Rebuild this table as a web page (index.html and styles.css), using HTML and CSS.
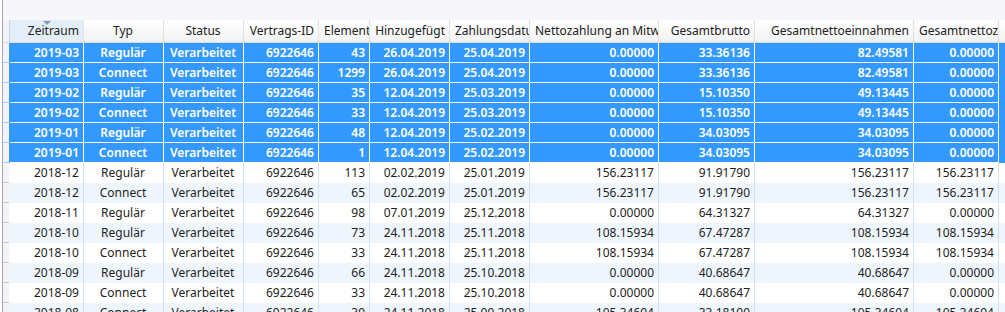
FILE: index.html
```html
<!DOCTYPE html>
<html lang="de">
<head>
<meta charset="utf-8">
<title>Zahlungen</title>
<link rel="stylesheet" href="styles.css">
</head>
<body>
<div class="frame">
  <div class="topbar"></div>
  <div class="table">
    <div class="row hdr">
      <div class="rh"></div>
      <div class="c r sorted"><span class="arrow"></span>Zeitraum</div>
      <div class="c m">Typ</div>
      <div class="c m">Status</div>
      <div class="c r">Vertrags-ID</div>
      <div class="c l">Elemente</div>
      <div class="c r">Hinzugefügt</div>
      <div class="c l">Zahlungsdatum</div>
      <div class="c l">Nettozahlung an Mitwirkende</div>
      <div class="c r">Gesamtbrutto</div>
      <div class="c r">Gesamtnettoeinnahmen</div>
      <div class="c l">Gesamtnettozahlung</div>
    </div>
    <div class="row sel"><div class="rh"></div><div class="c r">2019-03</div><div class="c m">Regulär</div><div class="c m">Verarbeitet</div><div class="c r">6922646</div><div class="c r">43</div><div class="c r">26.04.2019</div><div class="c r">25.04.2019</div><div class="c r">0.00000</div><div class="c r">33.36136</div><div class="c r">82.49581</div><div class="c r">0.00000</div></div>
    <div class="row sel"><div class="rh"></div><div class="c r">2019-03</div><div class="c m">Connect</div><div class="c m">Verarbeitet</div><div class="c r">6922646</div><div class="c r">1299</div><div class="c r">26.04.2019</div><div class="c r">25.04.2019</div><div class="c r">0.00000</div><div class="c r">33.36136</div><div class="c r">82.49581</div><div class="c r">0.00000</div></div>
    <div class="row sel"><div class="rh"></div><div class="c r">2019-02</div><div class="c m">Regulär</div><div class="c m">Verarbeitet</div><div class="c r">6922646</div><div class="c r">35</div><div class="c r">12.04.2019</div><div class="c r">25.03.2019</div><div class="c r">0.00000</div><div class="c r">15.10350</div><div class="c r">49.13445</div><div class="c r">0.00000</div></div>
    <div class="row sel"><div class="rh"></div><div class="c r">2019-02</div><div class="c m">Connect</div><div class="c m">Verarbeitet</div><div class="c r">6922646</div><div class="c r">33</div><div class="c r">12.04.2019</div><div class="c r">25.03.2019</div><div class="c r">0.00000</div><div class="c r">15.10350</div><div class="c r">49.13445</div><div class="c r">0.00000</div></div>
    <div class="row sel"><div class="rh"></div><div class="c r">2019-01</div><div class="c m">Regulär</div><div class="c m">Verarbeitet</div><div class="c r">6922646</div><div class="c r">48</div><div class="c r">12.04.2019</div><div class="c r">25.02.2019</div><div class="c r">0.00000</div><div class="c r">34.03095</div><div class="c r">34.03095</div><div class="c r">0.00000</div></div>
    <div class="row sel"><div class="rh"></div><div class="c r">2019-01</div><div class="c m">Connect</div><div class="c m">Verarbeitet</div><div class="c r">6922646</div><div class="c r">1</div><div class="c r">12.04.2019</div><div class="c r">25.02.2019</div><div class="c r">0.00000</div><div class="c r">34.03095</div><div class="c r">34.03095</div><div class="c r">0.00000</div></div>
    <div class="row"><div class="rh"></div><div class="c r">2018-12</div><div class="c m">Regulär</div><div class="c m">Verarbeitet</div><div class="c r">6922646</div><div class="c r">113</div><div class="c r">02.02.2019</div><div class="c r">25.01.2019</div><div class="c r">156.23117</div><div class="c r">91.91790</div><div class="c r">156.23117</div><div class="c r">156.23117</div></div>
    <div class="row alt"><div class="rh"></div><div class="c r">2018-12</div><div class="c m">Connect</div><div class="c m">Verarbeitet</div><div class="c r">6922646</div><div class="c r">65</div><div class="c r">02.02.2019</div><div class="c r">25.01.2019</div><div class="c r">156.23117</div><div class="c r">91.91790</div><div class="c r">156.23117</div><div class="c r">156.23117</div></div>
    <div class="row"><div class="rh"></div><div class="c r">2018-11</div><div class="c m">Regulär</div><div class="c m">Verarbeitet</div><div class="c r">6922646</div><div class="c r">98</div><div class="c r">07.01.2019</div><div class="c r">25.12.2018</div><div class="c r">0.00000</div><div class="c r">64.31327</div><div class="c r">64.31327</div><div class="c r">0.00000</div></div>
    <div class="row alt"><div class="rh"></div><div class="c r">2018-10</div><div class="c m">Regulär</div><div class="c m">Verarbeitet</div><div class="c r">6922646</div><div class="c r">73</div><div class="c r">24.11.2018</div><div class="c r">25.11.2018</div><div class="c r">108.15934</div><div class="c r">67.47287</div><div class="c r">108.15934</div><div class="c r">108.15934</div></div>
    <div class="row"><div class="rh"></div><div class="c r">2018-10</div><div class="c m">Connect</div><div class="c m">Verarbeitet</div><div class="c r">6922646</div><div class="c r">33</div><div class="c r">24.11.2018</div><div class="c r">25.11.2018</div><div class="c r">108.15934</div><div class="c r">67.47287</div><div class="c r">108.15934</div><div class="c r">108.15934</div></div>
    <div class="row alt"><div class="rh"></div><div class="c r">2018-09</div><div class="c m">Regulär</div><div class="c m">Verarbeitet</div><div class="c r">6922646</div><div class="c r">66</div><div class="c r">24.11.2018</div><div class="c r">25.10.2018</div><div class="c r">0.00000</div><div class="c r">40.68647</div><div class="c r">40.68647</div><div class="c r">0.00000</div></div>
    <div class="row"><div class="rh"></div><div class="c r">2018-09</div><div class="c m">Connect</div><div class="c m">Verarbeitet</div><div class="c r">6922646</div><div class="c r">33</div><div class="c r">24.11.2018</div><div class="c r">25.10.2018</div><div class="c r">0.00000</div><div class="c r">40.68647</div><div class="c r">40.68647</div><div class="c r">0.00000</div></div>
    <div class="row alt"><div class="rh"></div><div class="c r">2018-08</div><div class="c m">Connect</div><div class="c m">Verarbeitet</div><div class="c r">6922646</div><div class="c r">39</div><div class="c r">24.11.2018</div><div class="c r">25.09.2018</div><div class="c r">105.34694</div><div class="c r">33.18199</div><div class="c r">105.34694</div><div class="c r">105.34694</div></div>
  </div>
</div>
</body>
</html>
```

FILE: styles.css
```css
html, body {
  margin: 0;
  padding: 0;
  background: #ffffff;
  height: 312px;
  overflow: hidden;
}
.frame {
  margin-left: 2px;
  border-left: 1px solid #a9a9a9;
  height: 312px;
  font-family: "Noto Sans", "Open Sans", sans-serif;
  font-size: 12px;
  color: #1e1e1e;
}
.topbar {
  height: 20px;
  background: #f7f7fb;
}
.row {
  display: grid;
  grid-template-columns: 7px 74px 80px 80px 75px 51px 80px 80px 129px 96px 159px 85px;
  height: 20px;
  background: #ffffff;
}
.row.alt { background: #eef5fd; }
.rh {
  background: #f4f4f8;
  border-bottom: 1px solid #c9c9c9;
  box-sizing: border-box;
  margin-right: 1px;
}
.c {
  box-sizing: border-box;
  border-right: 1px solid #cfe3f3;
  padding: 0 4px 0 3px;
  white-space: nowrap;
  overflow: hidden;
  line-height: 20px;
}
.r { text-align: right; }
.m { text-align: center; }
.l { text-align: left; }

.row.sel { background: #3399ff; color: #ffffff; font-weight: 600; }
.row.sel .c { border-right-color: #ffffff; border-bottom: 1px solid #ffffff; line-height: 19px; }
.row.sel .rh { border-bottom-color: #a8d2fb; }

.row.hdr {
  height: 23px;
  background: linear-gradient(#ffffff, #f2f2f2);
  border-bottom: 1px solid #d8dde3;
  box-sizing: border-box;
}
.row.hdr .rh { background: #f4f4f8; border-bottom: none; }
.row.hdr .c {
  border-right: 1px solid #e2e2e2;
  line-height: 22px;
  color: #222;
  position: relative;
}
.row.hdr .c.l { padding-left: 5px; padding-right: 0; }
.row.hdr .sorted {
  background: #e4eef8;
  border-left: 1px solid #b7d4ee;
  margin-left: -1px;
}
.arrow {
  position: absolute;
  left: 33px;
  top: 1px;
  width: 0;
  height: 0;
  border-left: 4px solid transparent;
  border-right: 4px solid transparent;
  border-top: 4px solid #7f9bb5;
}
```
